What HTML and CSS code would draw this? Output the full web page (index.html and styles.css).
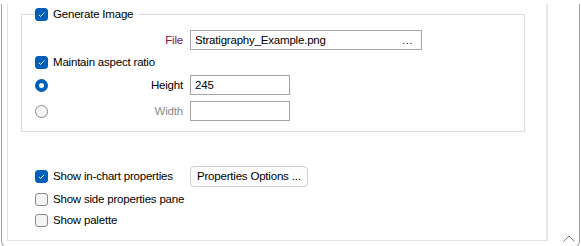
FILE: index.html
```html
<!DOCTYPE html>
<html>
<head>
<meta charset="utf-8">
<link rel="stylesheet" href="styles.css">
</head>
<body>
<div class="window">
  <div class="pane">
    <fieldset class="group">
      <legend class="legend">
        <span class="check on"><svg viewBox="0 0 13 13"><path d="M3.3 6.8 L5.4 8.8 L9.7 4.4" /></svg></span>
        <span class="txt">Generate Image</span>
      </legend>
      <div class="row r-file">
        <div class="lab"><span class="file-lab">File</span></div>
        <div class="input file-input"><span>Stratigraphy_Example.png</span><span class="dots">...</span></div>
      </div>
      <div class="row r-mar">
        <span class="check on"><svg viewBox="0 0 13 13"><path d="M3.3 6.8 L5.4 8.8 L9.7 4.4" /></svg></span>
        <span class="txt">Maintain aspect ratio</span>
      </div>
      <div class="row r-height">
        <div class="lab split"><span class="radio on"></span><span>Height</span></div>
        <div class="input num-input">245</div>
      </div>
      <div class="row r-width">
        <div class="lab split"><span class="radio"></span><span class="dim">Width</span></div>
        <div class="input num-input"></div>
      </div>
    </fieldset>
    <div class="opts">
      <div class="row r-chart">
        <div class="optlab">
          <span class="check on"><svg viewBox="0 0 13 13"><path d="M3.3 6.8 L5.4 8.8 L9.7 4.4" /></svg></span>
          <span class="txt">Show in-chart properties</span>
        </div>
        <div class="btn">Properties Options ...</div>
      </div>
      <div class="row r-side">
        <span class="check"></span>
        <span class="txt">Show side properties pane</span>
      </div>
      <div class="row r-pal">
        <span class="check"></span>
        <span class="txt">Show palette</span>
      </div>
    </div>
  </div>
  <svg class="caret" viewBox="0 0 12 7"><path d="M0.5 6.5 L6 1 L11.5 6.5" /></svg>
</div>
</body>
</html>
```
FILE: styles.css
```css
html, body {
  margin: 0;
  padding: 0;
  background: #ffffff;
}
body {
  font-family: "Liberation Sans", Arial, sans-serif;
  font-size: 11.5px;
  letter-spacing: -0.2px;
  color: #000;
}
.window {
  position: relative;
  margin-left: 1px;
  width: 577px;
  height: 243px;
  border: 1px solid #a3a3a3;
  border-top: none;
  border-radius: 0 0 7px 7px;
  background: #fff;
}
.pane {
  margin-left: 5px;
  width: 538px;
  height: 236px;
  border: 1px solid #e2e2e2;
  border-right: 2px solid #e6e6e6;
  border-top: none;
  box-sizing: content-box;
}
.group {
  margin: 4px 0 0 13px;
  width: 489px;
  padding: 0 0 10px 13px;
  border: 1px solid #dcdcdc;
  min-width: 0;
}
.legend {
  display: flex;
  align-items: center;
  height: 20px;
  padding: 0 6px 0 0;
  margin-left: 0;
}
.row {
  display: flex;
  align-items: center;
  height: 20px;
}
.r-file { margin-top: 6px; }
.r-mar { margin-top: 2px; }
.r-height { margin-top: 3px; }
.r-width { margin-top: 6px; }
.lab {
  width: 148px;
  margin-right: 7px;
  display: flex;
  justify-content: flex-end;
  align-items: center;
}
.lab.split { justify-content: space-between; }
.file-lab { color: #80104a; }
.dim { color: #8c8c8c; }
.input {
  height: 20px;
  box-sizing: border-box;
  border: 1px solid #a6a6a6;
  display: flex;
  align-items: center;
  padding: 0 4px;
  background: #fff;
}
.file-input {
  width: 232px;
  justify-content: space-between;
  padding-right: 8px;
}
.dots {
  color: #20206a;
  letter-spacing: 0.5px;
}
.num-input { width: 100px; }
.check {
  width: 13px;
  height: 13px;
  box-sizing: border-box;
  border: 1px solid #8a8a8a;
  border-radius: 3px;
  background: #f4f4f4;
  display: inline-block;
  flex: none;
}
.check.on {
  background: #005fb8;
  border-color: #005fb8;
}
.check svg {
  display: block;
  width: 11px;
  height: 11px;
}
.check svg path {
  fill: none;
  stroke: #fff;
  stroke-width: 1.1;
}
.txt { margin-left: 5px; }
.radio {
  width: 13px;
  height: 13px;
  box-sizing: border-box;
  border-radius: 50%;
  border: 1px solid #8a8a8a;
  background: #f4f4f4;
  flex: none;
}
.radio.on {
  border: 4px solid #005fb8;
  background: #fff;
}
.opts {
  margin: 33px 0 0 27px;
}
.r-chart { height: 22px; }
.optlab {
  width: 155px;
  display: flex;
  align-items: center;
}
.btn {
  height: 21px;
  box-sizing: border-box;
  border: 1px solid #cfcfcf;
  border-radius: 4px;
  background: #fdfdfd;
  padding: 0 6px;
  display: flex;
  align-items: center;
}
.r-side { margin-top: 2px; }
.r-pal { margin-top: 1px; }
.caret {
  position: absolute;
  right: 4px;
  bottom: 5px;
  width: 12px;
  height: 7px;
}
.caret path {
  fill: none;
  stroke: #7a7a7a;
  stroke-width: 1;
}
```
